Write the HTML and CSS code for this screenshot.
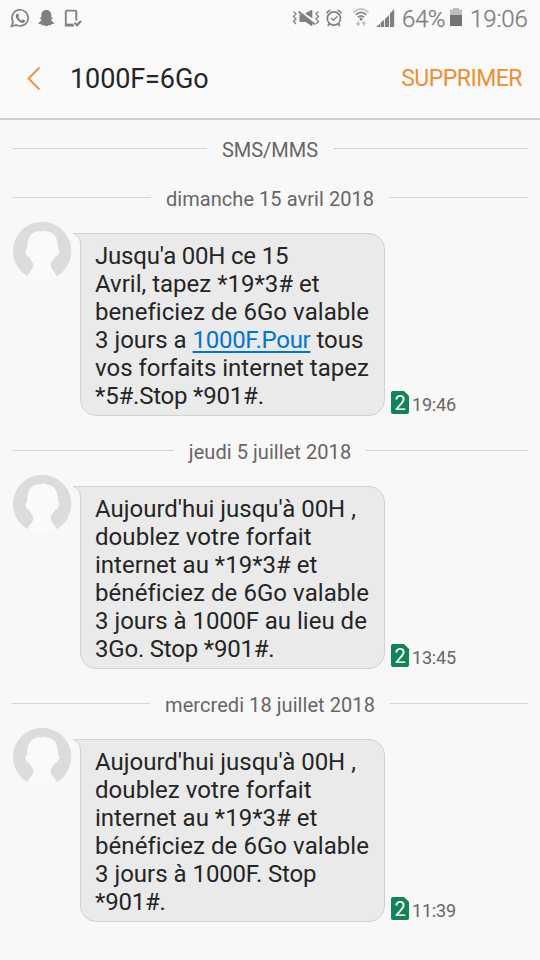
FILE: index.html
```
<!DOCTYPE html>
<html lang="fr">
<head>
<meta charset="utf-8">
<title>1000F=6Go</title>
<link rel="stylesheet" href="styles.css">
</head>
<body>
<svg width="0" height="0" class="defs">
  <symbol id="avatar" viewBox="0 0 60 60">
    <circle cx="30" cy="30" r="29.5" fill="#fafafa"/>
    <path d="M15.500 54.800A29.200 29.200 0 1 1 44.800 54.800C43 50 38.500 47 38.500 43.500C38.500 41 41.500 38.500 43 35.500C45 35.500 47 32.500 47.500 29.500C47.500 28 46.500 27.500 46 27.500C46.500 18 43 9.500 32.500 9.800L30.500 8.500L29.500 10C19 8.500 14.500 18 15.200 27.500C13.800 27.500 13.200 29 13.700 31C14.200 33.500 15.500 35.500 17.200 35.500C18 38.500 21.500 41 21.500 43.500C21.500 47 17.500 50 15.500 54.800Z" transform="translate(0 .4)" fill="#dcdcdc"/>
  </symbol>
  <symbol id="tail" viewBox="0 0 12 20">
    <path d="M0 .5C5 2 8.500 7 8.500 14V20H12V.5Z" fill="#eaeaea"/>
    <path d="M12 .5H0C5 2 7.500 6 7.500 12V20" fill="none" stroke="#d2d2d2"/>
  </symbol>
</svg>
<header class="status">
  <svg class="status-left" width="90" height="36" viewBox="0 0 90 36" fill="none" stroke="#808080">
    <path d="M11.500 26.200L13 21.900A8.100 8.100 0 1 1 16.200 25Z" stroke-width="1.700"/>
    <path d="M16.800 13.800L18 13.500L19.200 16L18.300 17.200C19 18.800 20 19.700 21.600 20.400L22.800 19.300L25.200 20.600C25 22.500 23.500 23.200 22 22.900C18.500 22.200 15.500 18.500 15.800 15.800Z" fill="#808080" stroke="none"/>
    <path d="M46.300 10C43 10 41.300 12.300 41.300 15.200V17.700L39.800 17.500L39.700 18.600L41.500 19.600C41 21.300 39.800 22.300 38.500 22.800V23.800L41.300 24.300L42 25.200H43.800L46.300 26.200L48.800 25.200H50.600L51.300 24.300L54.100 23.800V22.800C52.800 22.300 51.600 21.300 51.100 19.600L52.900 18.600L52.800 17.500L51.300 17.700V15.200C51.300 12.300 49.600 10 46.300 10Z" fill="#808080" stroke="none"/>
    <path d="M76.300 20.500V11.800Q76.300 10.600 75 10.600H67Q65.800 10.600 65.800 11.800V25.600H74" stroke-width="1.900"/>
    <path d="M67 24.600H73.500" stroke-width="2"/>
    <path d="M74.500 22.800L77 25.300L81 21" stroke-width="2"/>
  </svg>
  <div class="status-right">
    <svg width="110" height="36" viewBox="290 0 110 36" fill="none" stroke="#808080">
      <path d="M293.500 11.500L296 14L293.500 16.500L296 19L293.500 21.500L296 24M318.500 11.500L316 14L318.500 16.500L316 19L318.500 21.500L316 24" stroke-width="1.300"/>
      <path d="M305 13.500L312.300 9.500V18.200ZM299.500 14.500H302L312.300 22.500V26.500L305.500 22H299.500Z" fill="#808080" stroke="none"/>
      <path d="M298.500 11.500L315 24.500" stroke-width="1.800"/>
      <circle cx="333.900" cy="18.500" r="6.600" stroke-width="1.700"/>
      <path d="M327 13.500Q327.300 10.500 330.300 10.200M340.800 13.500Q340.500 10.500 337.500 10.200M329.500 23.500L327.800 26M338.300 23.500L340 26" stroke-width="1.600"/>
      <path d="M331 18L333.300 20.300L337.300 16.200" stroke-width="1.400"/>
      <path d="M353.500 12.500Q361 5.500 368.500 12.500" stroke="#c6c6c6" stroke-width="1.700"/>
      <path d="M355.800 14.700Q361 10 366.200 14.700M358 17.200Q361 14.600 364 17.200" stroke-width="1.800"/>
      <circle cx="361" cy="19" r="1.500" fill="#808080" stroke="none"/>
      <path d="M358.200 21V25M356.400 23.200L358.200 25L360 23.200M363.800 26V22M362 23.600L363.800 21.800L365.600 23.600" stroke="#bcbcbc" stroke-width="1.300"/>
      <path d="M376 27L380 23.800V27ZM380.600 22.800L384.200 19.700V27H380.600ZM385 18.800L389 15.200V27H385ZM389.900 13.500L394.200 9V27H389.900Z" fill="#808080" stroke="none"/>
    </svg>
    <span class="battery-text">64%</span>
    <svg class="battery" width="12" height="18" viewBox="0 0 12 18"><path d="M0 1.500H3V0H9V1.500H12V18H0Z" fill="#bdbdbd"/><path d="M0 7H12V18H0Z" fill="#737373"/></svg>
    <span class="clock">19:06</span>
  </div>
</header>
<nav class="appbar">
  <svg class="back" width="16" height="26" viewBox="0 0 16 26"><path d="M13.500 1.500L2.500 12.500L13.500 23.500" fill="none" stroke="#f09447" stroke-width="2"/></svg>
  <h1 class="title">1000F=6Go</h1>
  <span class="delete">SUPPRIMER</span>
</nav>
<main class="thread">
  <div class="divider kind"><span>SMS/MMS</span></div>
  <section class="day">
    <div class="divider"><span class="wide">dimanche 15 avril 2018</span></div>
    <div class="message">
      <svg class="avatar"><use href="#avatar"/></svg>
      <div class="bubble"><svg class="tail"><use href="#tail"/></svg><span class="tight">Jusqu'a 00H ce 15</span><br>Avril, tapez *19*3# et<br><span class="wide">beneficiez de 6Go valable</span><br>3 jours a <span class="link">1000F.Pour</span> tous<br>vos forfaits internet tapez<br><span class="tight">*5#.Stop *901#.</span></div>
      <div class="meta"><span class="sim">2</span><span class="time">19:46</span></div>
    </div>
  </section>
  <section class="day">
    <div class="divider"><span class="wide">jeudi 5 juillet 2018</span></div>
    <div class="message">
      <svg class="avatar"><use href="#avatar"/></svg>
      <div class="bubble"><svg class="tail"><use href="#tail"/></svg>Aujourd'hui jusqu'à 00H ,<br><span class="wide">doublez votre forfait</span><br>internet au *19*3# et<br><span class="wide">bénéficiez de 6Go valable</span><br>3 jours à <span class="tight">1000F</span> au lieu de<br><span class="tight">3Go. Stop *901#.</span></div>
      <div class="meta"><span class="sim">2</span><span class="time">13:45</span></div>
    </div>
  </section>
  <section class="day">
    <div class="divider"><span class="wide">mercredi 18 juillet 2018</span></div>
    <div class="message">
      <svg class="avatar"><use href="#avatar"/></svg>
      <div class="bubble"><svg class="tail"><use href="#tail"/></svg>Aujourd'hui jusqu'à 00H ,<br><span class="wide">doublez votre forfait</span><br>internet au *19*3# et<br><span class="wide">bénéficiez de 6Go valable</span><br>3 jours à <span class="tight">1000F. Stop</span><br><span class="tight">*901#.</span></div>
      <div class="meta"><span class="sim">2</span><span class="time">11:39</span></div>
    </div>
  </section>
</main>
</body>
</html>
```
FILE: styles.css
```
* { box-sizing: border-box; }
body {
  margin: 0;
  width: 540px;
  height: 960px;
  overflow: hidden;
  background: #f8f8f8;
  color: #252525;
  font-family: Roboto, "Liberation Sans", sans-serif;
}
svg { display: block; flex: none; }
.defs { position: absolute; }
.status {
  display: flex;
  justify-content: space-between;
  height: 36px;
  background: #fafafa;
  color: #808080;
}
.status-right {
  display: flex;
  width: 250px;
  font-size: 24px;
  line-height: 39px;
  white-space: nowrap;
}
.battery-text { width: 50px; margin-left: 2px; font-weight: 300; letter-spacing: -.4px; -webkit-text-stroke: .3px #808080; }
.battery { margin: 8px 8px 0 -2px; }
.clock { font-weight: 300; letter-spacing: -.1px; -webkit-text-stroke: .3px #808080; }
.appbar {
  display: flex;
  align-items: center;
  height: 84px;
  padding: 4px 18px 0 26px;
  border-bottom: 2px solid #d0d0d0;
  background: #fafafa;
}
.title { margin: 0 auto 0 28px; font-size: 27px; font-weight: 400; line-height: 32px; letter-spacing: -.1px; }
.delete { color: #ed8e35; font-size: 23px; line-height: 28px; letter-spacing: -.5px; }
.thread { padding-top: 14px; }
.divider {
  display: flex;
  align-items: center;
  gap: 15px;
  height: 31px;
  padding: 0 12px;
  color: #666;
  font-size: 20px;
  line-height: 24px;
}
.divider::before, .divider::after {
  content: "";
  flex: 1;
  height: 1px;
  margin-top: -3px;
  background: #d5d5d5;
}
.divider span { white-space: nowrap; }
.kind { margin-bottom: 18px; }
.day { height: 253px; }
.message { display: flex; }
.avatar { width: 60px; height: 60px; margin: 7px 8px 0 12px; }
.bubble {
  position: relative;
  width: 305px;
  height: 183px;
  margin-top: 19px;
  padding: 8px 0 0 14px;
  border: 1px solid #d2d2d2;
  border-radius: 0 16px 16px 16px;
  background: #eaeaea;
  font-size: 24px;
  line-height: 28px;
  white-space: nowrap;
}
.tight { letter-spacing: -.2px; }
.wide { letter-spacing: .06px; }
.tail { position: absolute; left: -8px; top: -1px; width: 12px; height: 20px; }
.link { color: #0074d4; letter-spacing: -.3px; text-decoration: underline; text-decoration-thickness: 2px; text-underline-offset: 3px; }
.meta { display: flex; align-items: flex-end; gap: 3px; padding: 0 0 2px 6px; }
.sim {
  width: 18px;
  height: 23px;
  border-radius: 2px;
  background: #118457;
  clip-path: polygon(0 0, 13px 0, 100% 5px, 100% 100%, 0 100%);
  color: #fff;
  font-size: 20px;
  line-height: 25px;
  text-align: center;
}
.time { color: #666; font-size: 18px; line-height: 18px; letter-spacing: -.2px; }
```
